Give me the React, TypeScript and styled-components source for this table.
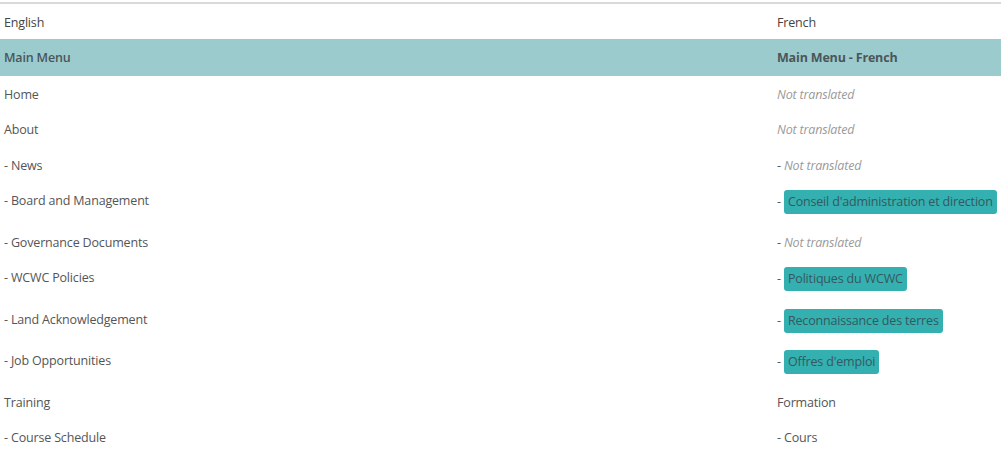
import React from "react";
import styled, { createGlobalStyle } from "styled-components";

const Global = createGlobalStyle`
  html, body { margin: 0; padding: 0; background: #fff; overflow: hidden; }
  body {
    font-family: "Open Sans", "Noto Sans", "Liberation Sans", sans-serif;
    font-size: 12.5px;
    letter-spacing: -0.17px;
    color: #555;
  }
`;

const Table = styled.div`
  margin-top: 2px;
  border-top: 2px solid #d9d9d9;
  display: grid;
  grid-template-columns: 773px 1fr;
  width: 1001px;
`;

const Row = styled.div<{ $band?: boolean; $tall?: boolean; $head?: boolean }>`
  display: contents;
  & > div {
    background: ${(p) => (p.$band ? "#9ccbcd" : "transparent")};
    min-height: ${(p) =>
      p.$tall ? "41.5px" : p.$band ? "37px" : p.$head ? "35px" : "35.5px"};
    color: ${(p) => (p.$band ? "#4a5659" : p.$head ? "#444" : "#555")};
    font-weight: ${(p) => (p.$band ? 600 : 400)};
  }
`;

const Cell = styled.div<{ $strong?: boolean }>`
  box-sizing: border-box;
  padding: 9.5px 4px 0;
  line-height: 18px;
  white-space: nowrap;
  ${(p) => (p.$strong ? "font-weight: 700 !important;" : "")}
`;

const Missing = styled.span`
  color: #9a9a9a;
  font-style: italic;
`;

const Badge = styled.span`
  display: inline-block;
  background: #34b0b0;
  color: #36585e;
  border-radius: 3px;
  padding: 3px 4px;
  margin-top: -2px;
  line-height: 18px;
  vertical-align: baseline;
`;

type Item = { en: string; fr?: string; sub?: boolean; translated?: boolean };

const items: Item[] = [
  { en: "Home" },
  { en: "About" },
  { en: "News", sub: true },
  { en: "Board and Management", sub: true, fr: "Conseil d'administration et direction" },
  { en: "Governance Documents", sub: true },
  { en: "WCWC Policies", sub: true, fr: "Politiques du WCWC" },
  { en: "Land Acknowledgement", sub: true, fr: "Reconnaissance des terres" },
  { en: "Job Opportunities", sub: true, fr: "Offres d'emploi" },
  { en: "Training", fr: "Formation", translated: true },
  { en: "Course Schedule", sub: true, fr: "Cours", translated: true },
];

export default function App() {
  return (
    <>
      <Global />
      <Table>
        <Row $head>
          <Cell>English</Cell>
          <Cell>French</Cell>
        </Row>
        <Row $band>
          <Cell>Main Menu</Cell>
          <Cell $strong>Main Menu - French</Cell>
        </Row>
        {items.map((it) => {
          const prefix = it.sub ? "- " : "";
          const badge = !!it.fr && !it.translated;
          return (
            <Row key={it.en} $tall={badge}>
              <Cell>
                {prefix}
                {it.en}
              </Cell>
              <Cell>
                {prefix}
                {!it.fr ? (
                  <Missing>Not translated</Missing>
                ) : badge ? (
                  <Badge>{it.fr}</Badge>
                ) : (
                  it.fr
                )}
              </Cell>
            </Row>
          );
        })}
      </Table>
    </>
  );
}
